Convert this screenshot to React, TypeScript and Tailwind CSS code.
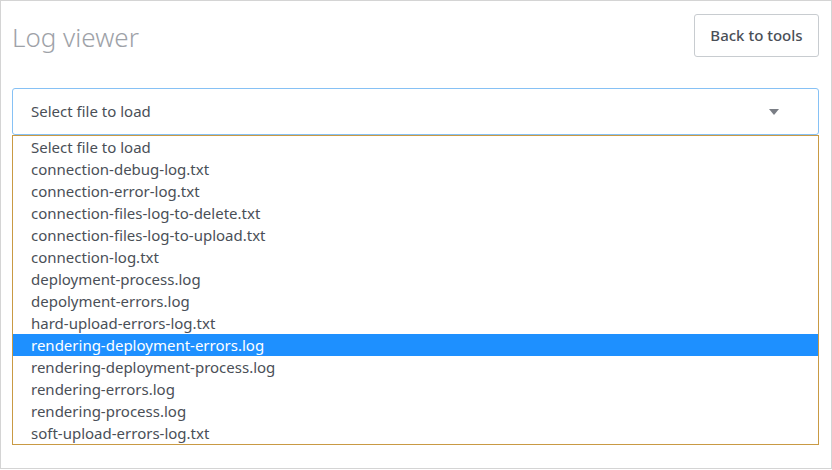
import React from "react";

const files = [
  "Select file to load",
  "connection-debug-log.txt",
  "connection-error-log.txt",
  "connection-files-log-to-delete.txt",
  "connection-files-log-to-upload.txt",
  "connection-log.txt",
  "deployment-process.log",
  "depolyment-errors.log",
  "hard-upload-errors-log.txt",
  "rendering-deployment-errors.log",
  "rendering-deployment-process.log",
  "rendering-errors.log",
  "rendering-process.log",
  "soft-upload-errors-log.txt",
];

export default function App() {
  return (
    <div
      className="w-[832px] h-[469px] border border-[#d4d4d4] bg-white pl-[11px] pr-[12px] pt-[13px]"
      style={{ fontFamily: '"Noto Sans", "Open Sans", sans-serif' }}
    >
      <div className="flex items-start justify-between">
        <h1 className="mt-[5px] text-[26px] font-light leading-[36px] text-[#9ea2a8]">Log viewer</h1>
        <button className="h-[43px] w-[125px] rounded-[3px] border border-[#c8ccd0] bg-white text-[15px] font-medium text-[#4a4f57]">
          Back to tools
        </button>
      </div>
      <div className="mt-[31px] flex h-[47px] items-center justify-between rounded-[3px] border border-[#86c1f5] pl-[18px] pr-[39px] text-[15px] text-[#4a4f57]">
        <span>Select file to load</span>
        <svg width="10" height="6" viewBox="0 0 10 6">
          <path d="M0 0 H10 L5 6 Z" fill="#7a7e85" />
        </svg>
      </div>
      <ul className="border border-[#c99a44] text-[15px] leading-[22px] text-[#4a4f57]">
        {files.map((f, i) => (
          <li
            key={f}
            className={
              i === 9
                ? "h-[22px] bg-[#1e90ff] pl-[18px] text-white"
                : "h-[22px] pl-[18px]"
            }
          >
            {f}
          </li>
        ))}
      </ul>
    </div>
  );
}
